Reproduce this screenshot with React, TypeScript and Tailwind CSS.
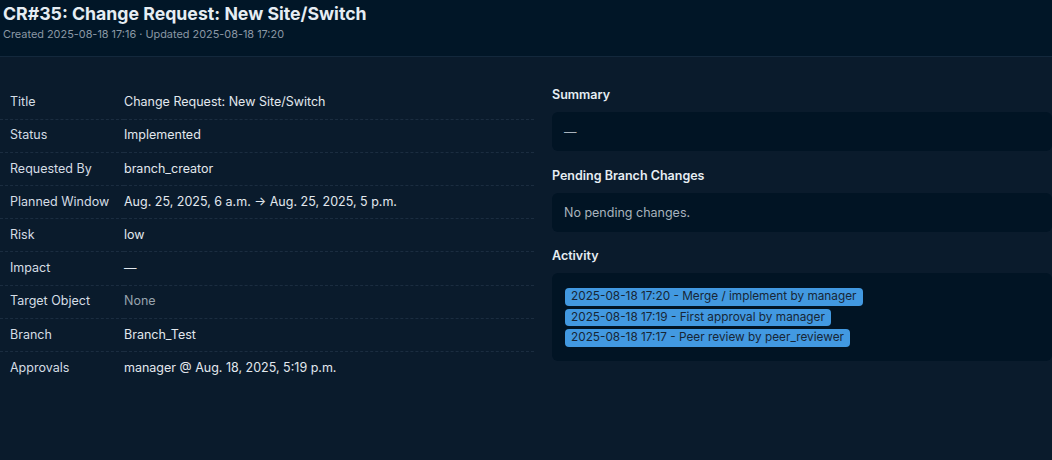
import React from "react"

const rows: { label: string; value: string; muted?: boolean }[] = [
  { label: "Title", value: "Change Request: New Site/Switch" },
  { label: "Status", value: "Implemented" },
  { label: "Requested By", value: "branch_creator" },
  { label: "Planned Window", value: "Aug. 25, 2025, 6 a.m. → Aug. 25, 2025, 5 p.m." },
  { label: "Risk", value: "low" },
  { label: "Impact", value: "—" },
  { label: "Target Object", value: "None", muted: true },
  { label: "Branch", value: "Branch_Test" },
  { label: "Approvals", value: "manager @ Aug. 18, 2025, 5:19 p.m." },
]

const activity = [
  "2025-08-18 17:20 - Merge / implement by manager",
  "2025-08-18 17:19 - First approval by manager",
  "2025-08-18 17:17 - Peer review by peer_reviewer",
]

function Section({ title, children }: { title: string; children: React.ReactNode }) {
  return (
    <div className="flex flex-col">
      <h3 className="text-[12.5px] font-semibold text-[#e6edf3] leading-4">{title}</h3>
      <div className="mt-[9px] rounded-md bg-[#011424] px-3 py-3">{children}</div>
    </div>
  )
}

export default function App() {
  return (
    <div className="w-[1052px] h-[460px] overflow-hidden bg-[#011627] font-['Inter',sans-serif]">
      <header className="px-[3px] pt-[2px] h-[56px]">
        <h1 className="text-[17.7px] font-bold text-[#e6edf3] leading-6">CR#35: Change Request: New Site/Switch</h1>
        <p className="text-[10.9px] text-[#8b98a5] leading-4">Created 2025-08-18 17:16 · Updated 2025-08-18 17:20</p>
      </header>

      <div className="w-[1100px] h-[420px] border-t border-[#13283c] bg-[#0a1b2c] grid grid-cols-[534px_1fr] gap-[18px] pt-[28px]">
        <table className="w-full self-start border-collapse text-[12.5px] mt-px">
          <tbody>
            {rows.map((r, i) => (
              <tr key={r.label} className={i < rows.length - 1 ? "border-b border-dashed border-[#1b2d40]" : ""}>
                <td className="pl-[10px] w-[124px] h-[33.2px] text-[#d5dde5]">{r.label}</td>
                <td className={r.muted ? "text-[#98a3ae]" : "text-[#e2e8ee]"}>{r.value}</td>
              </tr>
            ))}
          </tbody>
        </table>

        <div className="flex flex-col gap-[16.5px] pt-[2px] pr-[48px]">
          <Section title="Summary">
            <p className="text-[12.5px] leading-[15px] text-[#a8b3bd]">—</p>
          </Section>
          <Section title="Pending Branch Changes">
            <p className="text-[12.5px] leading-[15px] text-[#a8b3bd]">No pending changes.</p>
          </Section>
          <Section title="Activity">
            <ul className="flex flex-col items-start gap-[3px] pt-[3px] pb-[2px] pl-px">
              {activity.map((a) => (
                <li key={a} className="rounded bg-[#4299e1] px-[6px] h-[17.5px] leading-[17.5px] text-[11.8px] text-[#172636]">
                  {a}
                </li>
              ))}
            </ul>
          </Section>
        </div>
      </div>
    </div>
  )
}
